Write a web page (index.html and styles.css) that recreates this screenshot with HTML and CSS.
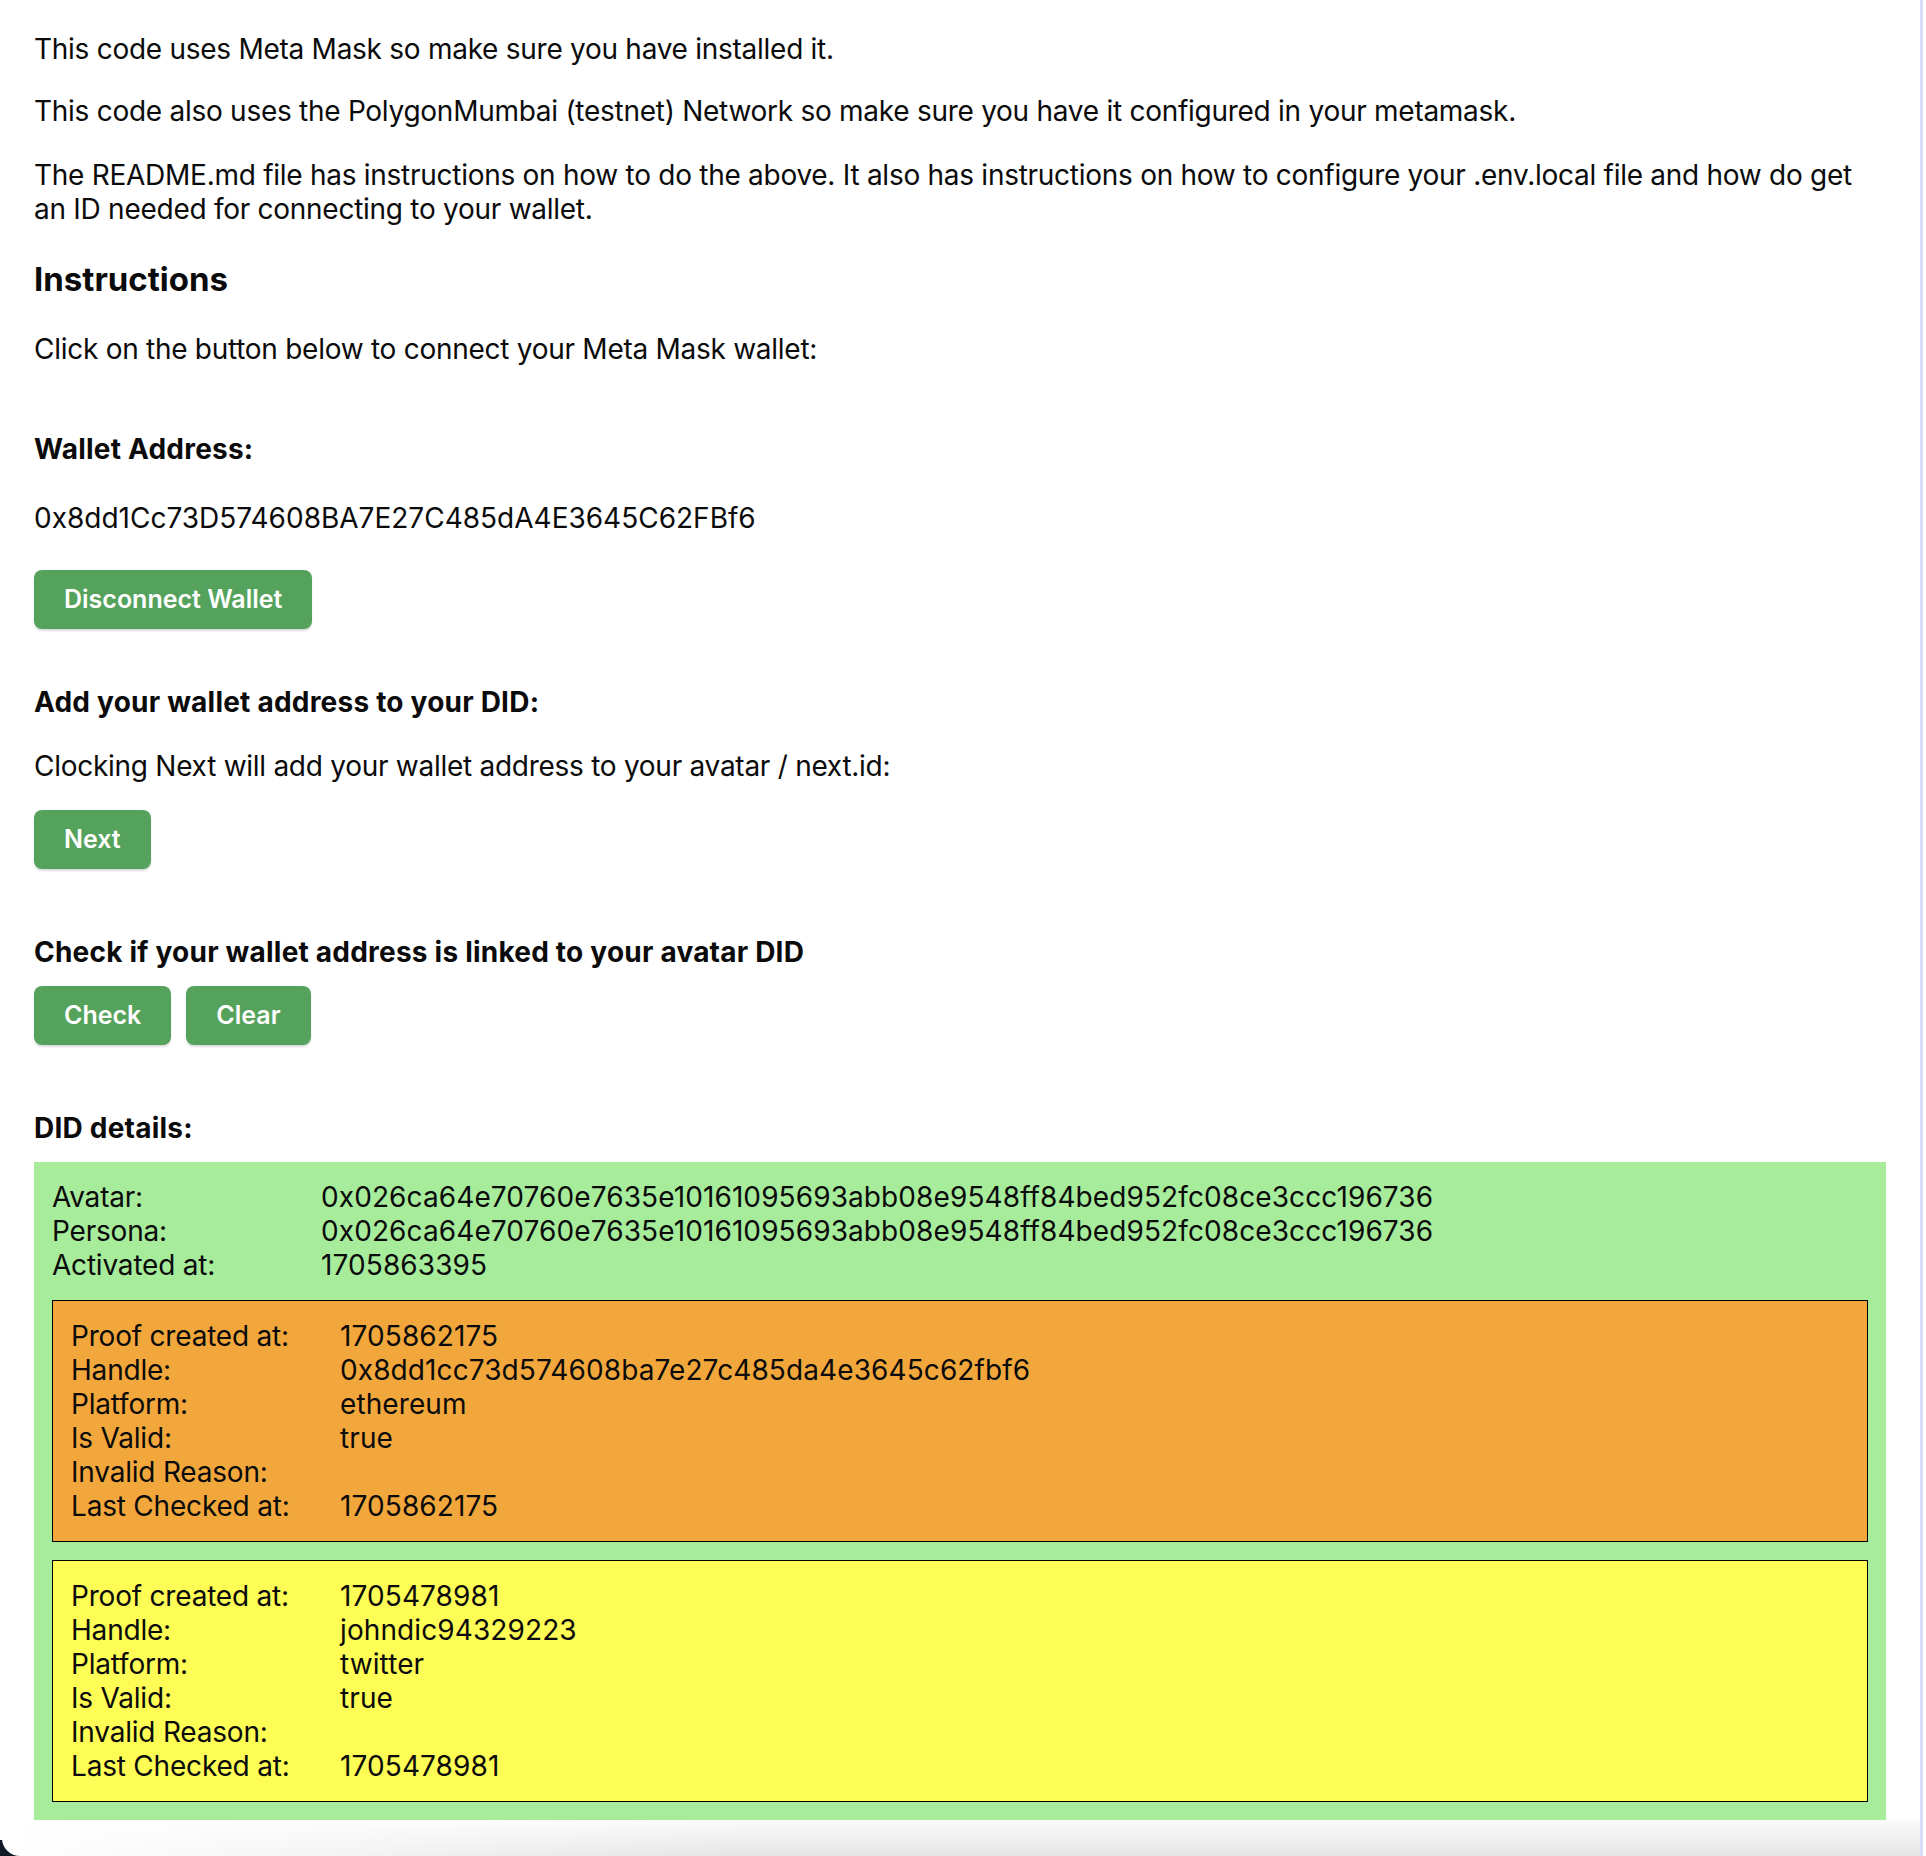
FILE: index.html
```html
<!DOCTYPE html>
<html lang="en">
<head>
<meta charset="utf-8">
<title>Next.ID Wallet Link</title>
<link rel="stylesheet" href="styles.css">
</head>
<body>
<div class="window">
  <main class="content">
    <p class="text first">This code uses Meta Mask so make sure you have installed it.</p>
    <p class="text">This code also uses the PolygonMumbai (testnet) Network so make sure you have it configured in your metamask.</p>
    <p class="text readme">The README.md file has instructions on how to do the above. It also has instructions on how to configure your .env.local file and how do get an ID needed for connecting to your wallet.</p>
    <h3 class="heading">Instructions</h3>
    <p class="text after-heading">Click on the button below to connect your Meta Mask wallet:</p>
    <h4 class="subheading wallet-title">Wallet Address:</h4>
    <p class="text address">0x8dd1Cc73D574608BA7E27C485dA4E3645C62FBf6</p>
    <button class="btn btn-disconnect" type="button">Disconnect Wallet</button>
    <h4 class="subheading add-title">Add your wallet address to your DID:</h4>
    <p class="text clocking">Clocking Next will add your wallet address to your avatar / next.id:</p>
    <button class="btn btn-next" type="button">Next</button>
    <h4 class="subheading check-title">Check if your wallet address is linked to your avatar DID</h4>
    <div class="btn-row">
      <button class="btn" type="button">Check</button>
      <button class="btn" type="button">Clear</button>
    </div>
    <h4 class="subheading check-title">DID details:</h4>
    <section class="did">
      <div class="kv">
        <span class="key">Avatar:</span><span class="val">0x026ca64e70760e7635e10161095693abb08e9548ff84bed952fc08ce3ccc196736</span>
        <span class="key">Persona:</span><span class="val">0x026ca64e70760e7635e10161095693abb08e9548ff84bed952fc08ce3ccc196736</span>
        <span class="key">Activated at:</span><span class="val">1705863395</span>
      </div>
      <div class="proof proof-ethereum">
        <div class="kv">
          <span class="key">Proof created at:</span><span class="val">1705862175</span>
          <span class="key">Handle:</span><span class="val">0x8dd1cc73d574608ba7e27c485da4e3645c62fbf6</span>
          <span class="key">Platform:</span><span class="val">ethereum</span>
          <span class="key">Is Valid:</span><span class="val">true</span>
          <span class="key">Invalid Reason:</span><span class="val"></span>
          <span class="key">Last Checked at:</span><span class="val">1705862175</span>
        </div>
      </div>
      <div class="proof proof-twitter">
        <div class="kv">
          <span class="key">Proof created at:</span><span class="val">1705478981</span>
          <span class="key">Handle:</span><span class="val">johndic94329223</span>
          <span class="key">Platform:</span><span class="val">twitter</span>
          <span class="key">Is Valid:</span><span class="val">true</span>
          <span class="key">Invalid Reason:</span><span class="val"></span>
          <span class="key">Last Checked at:</span><span class="val">1705478981</span>
        </div>
      </div>
    </section>
  </main>
  <div class="bottom-bar"><span class="corner"></span></div>
</div>
</body>
</html>
```

FILE: styles.css
```css
* { box-sizing: border-box; }

html, body {
  margin: 0;
  padding: 0;
  background: #ffffff;
}

body {
  font-family: "Inter", "Liberation Sans", Arial, sans-serif;
  font-size: 28px;
  line-height: 34px;
  color: #0b0b0b;
}

.window {
  width: 1923px;
  min-height: 1856px;
  border-right: 3px solid #d6def6;
  display: flex;
  flex-direction: column;
}

.content {
  display: flex;
  flex-direction: column;
  align-items: flex-start;
  padding: 32px 34px 0 34px;
}

.text {
  margin: 28px 0 0;
  width: 100%;
  letter-spacing: -0.27px;
}

.text.first { margin-top: 0; }
.text.readme { margin-top: 30px; }

.heading {
  margin: 33px 0 0;
  font-size: 33px;
  line-height: 40px;
  font-weight: 700;
}

.after-heading { margin-top: 33px; }

.subheading {
  margin: 0;
  font-size: 28px;
  line-height: 34px;
  font-weight: 700;
  letter-spacing: 0.22px;
}

.wallet-title { margin-top: 66px; }
.address { margin-top: 35px; letter-spacing: 0; }
.btn-disconnect { margin-top: 35px; }
.add-title { margin-top: 56px; }
.clocking { margin-top: 30px; }
.btn-next { margin-top: 27px; }
.check-title { margin-top: 66px; }

.btn-row {
  display: flex;
  gap: 15px;
  margin-top: 17px;
}

.btn {
  font-family: inherit;
  font-size: 25px;
  font-weight: 600;
  line-height: 34px;
  color: #ffffff;
  background: #54a25c;
  border: none;
  border-radius: 8px;
  padding: 12px 30px 13px;
  box-shadow: 0 2px 2px rgba(0, 0, 0, 0.14);
  cursor: pointer;
}

.did {
  margin-top: 17px;
  width: 100%;
  background: #a7ec9b;
  padding: 18px;
  display: flex;
  flex-direction: column;
  gap: 18px;
}

.kv {
  display: grid;
  grid-template-columns: 269px 1fr;
}

.key { letter-spacing: -0.2px; }
.val { letter-spacing: 0.1px; }

.proof {
  border: 1px solid #000;
  padding: 18px;
}

.proof-ethereum { background: #f2a73c; }
.proof-twitter { background: #fefd55; }

.bottom-bar {
  position: relative;
  margin-top: auto;
  height: 36px;
  background:
    linear-gradient(to right, #ffffff 0%, rgba(255,255,255,0) 40%),
    linear-gradient(to bottom, #fbfbfb 0%, #e4e4e4 100%);
}

.corner {
  position: absolute;
  left: 0;
  bottom: 0;
  width: 24px;
  height: 16px;
  background: #0f1b28;
}

.corner::after {
  content: "";
  position: absolute;
  inset: -2px 0 0 2px;
  background: #ffffff;
  border-bottom-left-radius: 20px;
}
```
